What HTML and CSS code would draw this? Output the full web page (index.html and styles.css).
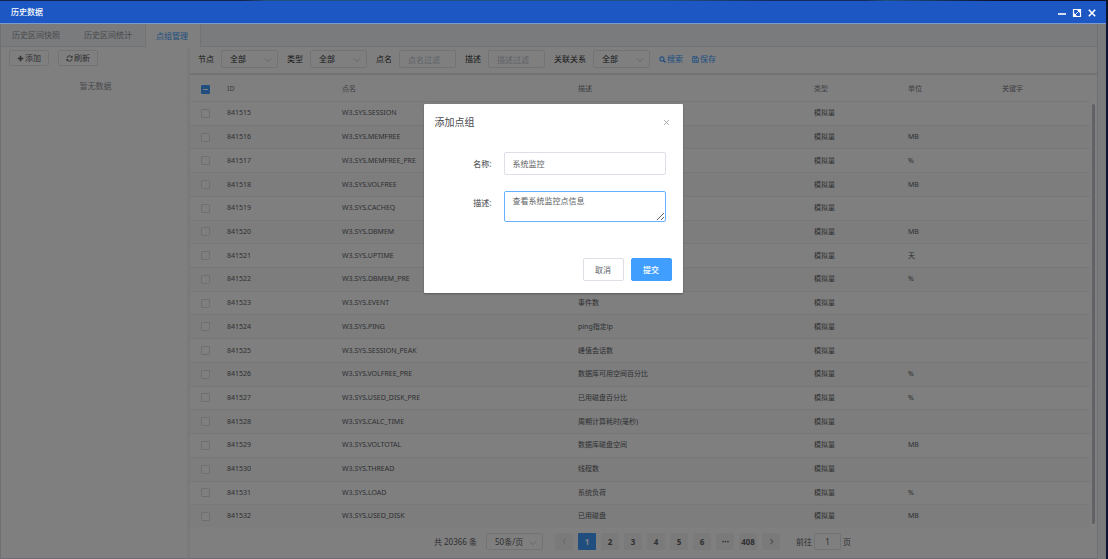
FILE: index.html
```html
<!DOCTYPE html>
<html lang="zh-CN">
<head>
<meta charset="utf-8">
<title>历史数据</title>
<link rel="stylesheet" href="styles.css">
</head>
<body>
<div class="window">
  <header class="titlebar">
    <h1 class="titlebar-name">历史数据</h1>
    <div class="titlebar-tools">
      <button class="tool" type="button" aria-label="最小化"><svg viewBox="0 0 10 10"><path d="M1 6h8" stroke="currentColor" stroke-width="1.6"/></svg></button>
      <button class="tool" type="button" aria-label="最大化"><svg viewBox="0 0 10 10"><path d="M1.5 1.5h7v7h-7z" fill="none" stroke="currentColor" stroke-width="1.2"/><path d="M5 2h3v3zM2 5v3h3z" fill="currentColor"/><path d="M3 7l4-4" stroke="currentColor"/></svg></button>
      <button class="tool" type="button" aria-label="关闭"><svg viewBox="0 0 10 10"><path d="M1.8 1.8l6.4 6.4M8.2 1.8l-6.4 6.4" stroke="currentColor" stroke-width="1.6"/></svg></button>
    </div>
  </header>

  <div class="content">
    <div class="page">
      <nav class="tabs">
        <button class="tab" type="button">历史区间快照</button>
        <button class="tab" type="button">历史区间统计</button>
        <button class="tab tab-active" type="button">点组管理</button>
      </nav>
      <div class="columns">
        <aside class="groups">
          <div class="groups-actions">
            <button class="btn-small" type="button"><svg class="icon" viewBox="0 0 10 10"><path d="M5 1v8M1 5h8" stroke="currentColor" stroke-width="2.4"/></svg>添加</button>
            <button class="btn-small" type="button"><svg class="icon" viewBox="0 0 10 10"><path d="M1.2 4.4a3.9 3.9 0 0 1 7-1.6M8.8 5.6a3.9 3.9 0 0 1-7 1.6" fill="none" stroke="currentColor" stroke-width="1.4"/><path d="M9.4.8v3.4H6zM.6 9.2V5.8H4z" fill="currentColor"/></svg>刷新</button>
          </div>
          <p class="groups-empty">暂无数据</p>
        </aside>

        <main class="points">
          <form class="filters">
            <label class="filter">节点<span class="select"><select><option>全部</option></select><svg class="chevron" viewBox="0 0 10 10"><path d="M1 3l4 4 4-4" fill="none" stroke="currentColor"/></svg></span></label>
            <label class="filter">类型<span class="select"><select><option>全部</option></select><svg class="chevron" viewBox="0 0 10 10"><path d="M1 3l4 4 4-4" fill="none" stroke="currentColor"/></svg></span></label>
            <label class="filter">点名<input class="field" type="text" placeholder="点名过滤"></label>
            <label class="filter">描述<input class="field" type="text" placeholder="描述过滤"></label>
            <label class="filter">关联关系<span class="select"><select><option>全部</option></select><svg class="chevron" viewBox="0 0 10 10"><path d="M1 3l4 4 4-4" fill="none" stroke="currentColor"/></svg></span></label>
            <button class="btn-link" type="button"><svg class="icon" viewBox="0 0 10 10"><circle cx="4.2" cy="4.2" r="2.9" fill="none" stroke="currentColor" stroke-width="1.6"/><path d="M6.3 6.3l3 3" stroke="currentColor" stroke-width="2"/></svg>搜索</button>
            <button class="btn-link" type="button"><svg class="icon" viewBox="0 0 10 10"><path d="M1 1h6l2 2v6H1zM3 1v2.5h3.5V1M3 9V6h4v3" fill="none" stroke="currentColor" stroke-width="1.2"/></svg>保存</button>
          </form>

          <div class="grid">
            <table class="table">
              <colgroup><col class="col-check"><col class="col-id"><col><col><col class="col-type"><col class="col-type"><col class="col-key"></colgroup>
              <thead><tr><th class="cell-check"><input class="check check-partial" type="checkbox" aria-label="全选"></th><th>ID</th><th>点名</th><th>描述</th><th>类型</th><th>单位</th><th>关键字</th></tr></thead>
              <tbody>
                <tr><td class="cell-check"><input class="check" type="checkbox" aria-label="841515"></td><td>841515</td><td>W3.SYS.SESSION</td><td></td><td>模拟量</td><td></td><td></td></tr>
                <tr><td class="cell-check"><input class="check" type="checkbox" aria-label="841516"></td><td>841516</td><td>W3.SYS.MEMFREE</td><td></td><td>模拟量</td><td>MB</td><td></td></tr>
                <tr><td class="cell-check"><input class="check" type="checkbox" aria-label="841517"></td><td>841517</td><td>W3.SYS.MEMFREE_PRE</td><td></td><td>模拟量</td><td>%</td><td></td></tr>
                <tr><td class="cell-check"><input class="check" type="checkbox" aria-label="841518"></td><td>841518</td><td>W3.SYS.VOLFREE</td><td></td><td>模拟量</td><td>MB</td><td></td></tr>
                <tr><td class="cell-check"><input class="check" type="checkbox" aria-label="841519"></td><td>841519</td><td>W3.SYS.CACHEQ</td><td></td><td>模拟量</td><td></td><td></td></tr>
                <tr><td class="cell-check"><input class="check" type="checkbox" aria-label="841520"></td><td>841520</td><td>W3.SYS.DBMEM</td><td></td><td>模拟量</td><td>MB</td><td></td></tr>
                <tr><td class="cell-check"><input class="check" type="checkbox" aria-label="841521"></td><td>841521</td><td>W3.SYS.UPTIME</td><td></td><td>模拟量</td><td>天</td><td></td></tr>
                <tr><td class="cell-check"><input class="check" type="checkbox" aria-label="841522"></td><td>841522</td><td>W3.SYS.DBMEM_PRE</td><td></td><td>模拟量</td><td>%</td><td></td></tr>
                <tr><td class="cell-check"><input class="check" type="checkbox" aria-label="841523"></td><td>841523</td><td>W3.SYS.EVENT</td><td>事件数</td><td>模拟量</td><td></td><td></td></tr>
                <tr><td class="cell-check"><input class="check" type="checkbox" aria-label="841524"></td><td>841524</td><td>W3.SYS.PING</td><td>ping指定ip</td><td>模拟量</td><td></td><td></td></tr>
                <tr><td class="cell-check"><input class="check" type="checkbox" aria-label="841525"></td><td>841525</td><td>W3.SYS.SESSION_PEAK</td><td>峰值会话数</td><td>模拟量</td><td></td><td></td></tr>
                <tr><td class="cell-check"><input class="check" type="checkbox" aria-label="841526"></td><td>841526</td><td>W3.SYS.VOLFREE_PRE</td><td>数据库可用空间百分比</td><td>模拟量</td><td>%</td><td></td></tr>
                <tr><td class="cell-check"><input class="check" type="checkbox" aria-label="841527"></td><td>841527</td><td>W3.SYS.USED_DISK_PRE</td><td>已用磁盘百分比</td><td>模拟量</td><td>%</td><td></td></tr>
                <tr><td class="cell-check"><input class="check" type="checkbox" aria-label="841528"></td><td>841528</td><td>W3.SYS.CALC_TIME</td><td>周期计算耗时(毫秒)</td><td>模拟量</td><td></td><td></td></tr>
                <tr><td class="cell-check"><input class="check" type="checkbox" aria-label="841529"></td><td>841529</td><td>W3.SYS.VOLTOTAL</td><td>数据库磁盘空间</td><td>模拟量</td><td>MB</td><td></td></tr>
                <tr><td class="cell-check"><input class="check" type="checkbox" aria-label="841530"></td><td>841530</td><td>W3.SYS.THREAD</td><td>线程数</td><td>模拟量</td><td></td><td></td></tr>
                <tr><td class="cell-check"><input class="check" type="checkbox" aria-label="841531"></td><td>841531</td><td>W3.SYS.LOAD</td><td>系统负荷</td><td>模拟量</td><td>%</td><td></td></tr>
                <tr><td class="cell-check"><input class="check" type="checkbox" aria-label="841532"></td><td>841532</td><td>W3.SYS.USED_DISK</td><td>已用磁盘</td><td>模拟量</td><td>MB</td><td></td></tr>
              </tbody>
            </table>
            <div class="scrollbar"></div>
          </div>

          <div class="pager">
            <span>共 20366 条</span>
            <span class="select"><select aria-label="每页条数"><option>50条/页</option></select><svg class="chevron" viewBox="0 0 10 10"><path d="M1 3l4 4 4-4" fill="none" stroke="currentColor"/></svg></span>
            <div class="pages">
              <button class="page-btn page-off" type="button" aria-label="上一页"><svg class="icon" viewBox="0 0 10 10"><path d="M6.5 1.5L3 5l3.5 3.5" fill="none" stroke="currentColor" stroke-width="1.4"/></svg></button>
              <button class="page-btn page-current" type="button">1</button>
              <button class="page-btn" type="button">2</button>
              <button class="page-btn" type="button">3</button>
              <button class="page-btn" type="button">4</button>
              <button class="page-btn" type="button">5</button>
              <button class="page-btn" type="button">6</button>
              <button class="page-btn" type="button" aria-label="更多"><svg class="icon" viewBox="0 0 10 10"><g fill="currentColor"><circle cx="1.5" cy="5" r="1.2"/><circle cx="5" cy="5" r="1.2"/><circle cx="8.5" cy="5" r="1.2"/></g></svg></button>
              <button class="page-btn" type="button">408</button>
              <button class="page-btn" type="button" aria-label="下一页"><svg class="icon" viewBox="0 0 10 10"><path d="M3.5 1.5L7 5 3.5 8.5" fill="none" stroke="currentColor" stroke-width="1.4"/></svg></button>
            </div>
            <label class="jump">前往<input class="jump-field" type="text" value="1">页</label>
          </div>
        </main>
      </div>
    </div>

    <div class="overlay">
      <form class="dialog" role="dialog" aria-labelledby="dialog-title">
        <div class="dialog-head">
          <h2 class="dialog-title" id="dialog-title">添加点组</h2>
          <button class="dialog-close" type="button" aria-label="关闭"><svg class="icon" viewBox="0 0 10 10"><path d="M1.5 1.5l7 7M8.5 1.5l-7 7" stroke="currentColor" stroke-width="1.1"/></svg></button>
        </div>
        <div class="dialog-body">
          <label class="dialog-label" for="group-name">名称:</label>
          <input class="dialog-field" id="group-name" type="text" value="系统监控">
          <label class="dialog-label" for="group-desc">描述:</label>
          <textarea class="dialog-field dialog-area" id="group-desc">查看系统监控点信息</textarea>
        </div>
        <div class="dialog-foot">
          <button class="btn" type="button">取消</button>
          <button class="btn btn-primary" type="button">提交</button>
        </div>
      </form>
    </div>
  </div>
</div>
</body>
</html>
```
FILE: styles.css
```css
* { box-sizing: border-box; }

body {
  margin: 0;
  background: #0b1230;
  color: #606266;
  font: 8px/12px "Noto Sans", "Noto Sans CJK SC", sans-serif;
}

button, input, select, textarea { margin: 0; font: inherit; color: inherit; }
button { padding: 0; border: 0; background: none; cursor: pointer; }
h1, h2, p { margin: 0; }

.icon { width: 7px; height: 7px; flex: none; }

.window {
  display: flex;
  flex-direction: column;
  min-height: 100vh;
  padding: 1px 2px 0 0;
  background: linear-gradient(90deg, #14224f 0 22%, #205080 24% 60%, #152a5c 70% 78%, #205080 80%, #0b1230 90%) top / 100% 1px no-repeat;
}

.titlebar {
  display: flex;
  align-items: center;
  justify-content: space-between;
  height: 23px;
  padding: 0 9px 0 11px;
  border-bottom: 1px solid #7d9ad0;
  background: #1c57c4;
  color: #fff;
}
.titlebar-name { font-size: 8px; font-weight: 500; }
.titlebar-tools { display: flex; gap: 5px; padding-top: 2px; }
.tool { display: flex; color: #fff; }
.tool svg { width: 10px; height: 10px; }

.content { position: relative; display: flex; flex: 1; background: #f5f7fa; }
.page {
  display: flex;
  flex: 1;
  flex-direction: column;
  margin-right: 8px;
  border: solid #dcdfe6;
  border-width: 0 1px 1px;
  background: #fff;
}

.tabs { display: flex; height: 23px; border-bottom: 1px solid #e4e7ed; background: #f5f7fa; }
.tab { padding: 0 13px 0 11px; color: #909399; }
.tab-active {
  height: 23px;
  padding: 0 12px 0 10px;
  border: solid #e4e7ed;
  border-width: 0 1px;
  background: #fff;
  color: #409eff;
}

.columns { display: flex; flex: 1; }

.groups { flex: none; width: 189px; padding: 3px 8px; border-right: 3px solid #f4f4f4; }
.groups-actions { display: flex; gap: 9px; }
.btn-small {
  display: flex;
  align-items: center;
  justify-content: center;
  gap: 1px;
  width: 40px;
  height: 16px;
  border: 1px solid #e4e7ed;
  border-radius: 2px;
}
.groups-empty { padding: 14px 0 0 3px; color: #909399; text-align: center; }

.points { display: flex; flex: 1; flex-direction: column; min-width: 0; }

.filters {
  display: flex;
  align-items: center;
  gap: 9px;
  height: 28px;
  padding: 0 8px 2px;
  border-bottom: 2px solid #e4e4e4;
}
.filter { display: flex; align-items: center; gap: 7px; color: #303133; }

.select { position: relative; display: flex; width: 57px; height: 18px; }
.select select {
  width: 100%;
  padding: 0 8px;
  border: 1px solid #e4e7ed;
  border-radius: 2px;
  appearance: none;
  background: #fff;
}
.chevron { position: absolute; top: 6px; right: 6px; width: 8px; height: 8px; color: #c0c4cc; pointer-events: none; }
.field { width: 57px; height: 18px; padding: 0 8px; border: 1px solid #e4e7ed; border-radius: 2px; background: #fff; }
.field::placeholder { color: #c0c4cc; }
.btn-link { display: flex; align-items: center; gap: 1px; color: #409eff; }

.grid { display: flex; flex: 1; padding: 2px 2px 0 0; }
.table {
  flex: 1;
  width: 100%;
  height: 450px;
  border-collapse: separate;
  border-spacing: 0;
  table-layout: fixed;
  font-size: 7px;
  line-height: 10px;
}
.col-check { width: 33px; }
.col-id { width: 115px; }
.col-type { width: 94px; }
.col-key { width: 92px; }
.table th, .table td { padding: 0 4px; border-bottom: 1px solid #ebeef5; text-align: left; }
.table th { height: 25px; color: #909399; font-weight: 500; }
.table tbody tr:nth-child(even) { background: #fafafa; }
.table tbody tr:last-child td { border-bottom: 0; }
.table .cell-check { padding: 0 0 0 11px; }

.check {
  display: block;
  width: 9px;
  height: 9px;
  border: 1px solid #dcdfe6;
  border-radius: 1px;
  appearance: none;
  background: #fff;
}
.check-partial { border-color: #409eff; background: linear-gradient(#fff, #fff) center / 5px 1px no-repeat #409eff; }

.scrollbar { width: 3px; margin: 27px 0 3px 2px; border-radius: 2px; background: #c0c4cc; }

.pager { display: flex; align-items: center; justify-content: center; gap: 9px; height: 31px; padding: 0 2px 2px 0; }
.pager .select { height: 17px; }
.pages { display: flex; gap: 5px; margin: 0 7px 0 3px; }
.page-btn {
  display: flex;
  align-items: center;
  justify-content: center;
  width: 18px;
  height: 17px;
  border-radius: 1px;
  background: #f4f4f5;
  font-weight: 700;
}
.page-off { color: #c0c4cc; }
.page-current { background: #409eff; color: #fff; }
.jump { display: flex; align-items: center; gap: 2px; }
.jump-field { width: 27px; height: 17px; padding: 0; border: 1px solid #e4e7ed; border-radius: 2px; background: #fff; text-align: center; }

.overlay {
  position: absolute;
  inset: 0;
  display: flex;
  align-items: flex-start;
  justify-content: center;
  padding-top: 80px;
  background: rgba(0, 0, 0, .5);
}

.dialog { width: 259px; border-radius: 1px; background: #fff; box-shadow: 0 1px 2px rgba(0, 0, 0, .3); }
.dialog-head { display: flex; align-items: center; justify-content: space-between; padding: 11px 13px 11px 11px; }
.dialog-title { color: #484a4e; font-size: 10px; font-weight: 400; line-height: 14px; }
.dialog-close { display: flex; color: #909399; }
.dialog-body {
  display: grid;
  grid-template-columns: 57px 1fr;
  gap: 16px 12px;
  padding: 12px 17px 17px 11px;
}
.dialog-label { padding-top: 6px; font-weight: 500; text-align: right; }
.dialog-field { width: 100%; height: 23px; padding: 0 8px; border: 1px solid #dcdfe6; border-radius: 2px; background: #fff; }
.dialog-area { height: 31px; padding: 3px 8px; border-color: #66b1ff; outline: 0; resize: vertical; }
.dialog-foot { display: flex; justify-content: flex-end; gap: 7px; padding: 19px 11px 12px; }
.btn { width: 41px; height: 23px; border: 1px solid #dcdfe6; border-radius: 2px; }
.btn-primary { border-color: #409eff; background: #409eff; color: #fff; font-weight: 500; }
```
